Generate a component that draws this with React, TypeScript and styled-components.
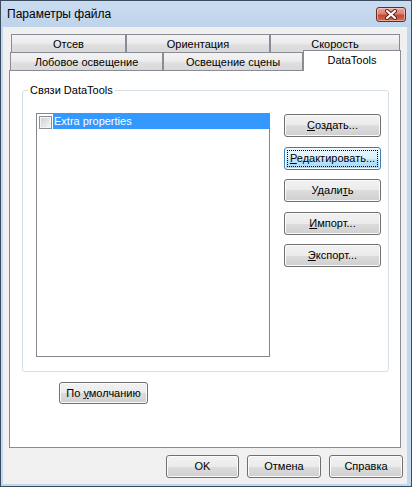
import React from "react";
import styled, { createGlobalStyle, css } from "styled-components";

const GlobalStyle = createGlobalStyle`
  html, body { margin: 0; padding: 0; background: #ffffff; }
  body { font-family: "Liberation Sans", Arial, sans-serif; font-size: 11px; color: #000; }
  * { box-sizing: border-box; }
`;

const Window = styled.div`
  width: 412px;
  height: 487px;
  border: 1px solid #3b4c60;
  background: #c3d8ee;
  display: flex;
  flex-direction: column;
`;

const TitleBar = styled.div`
  height: 26px;
  flex: none;
  display: flex;
  align-items: center;
  justify-content: space-between;
  padding: 0 5px 0 6px;
  background: linear-gradient(#cadcf0, #bed4ec);
  font-size: 12px;
  color: #000;
`;

const CloseButton = styled.div`
  width: 30px;
  height: 15px;
  border: 1px solid #6a2a22;
  border-radius: 3px;
  background: linear-gradient(#e9a99b 0%, #d8816f 45%, #c24a36 55%, #d06a52 100%);
  box-shadow: inset 0 0 0 1px rgba(255, 220, 210, 0.55);
  display: flex;
  align-items: center;
  justify-content: center;
`;

const Client = styled.div`
  flex: 1;
  margin: 0 4px 2px 2px;
  background: #f0f0f0;
  display: flex;
  flex-direction: column;
  padding: 7px 0 0 6px;
`;

const TabRow = styled.div<{ $indent: number }>`
  display: flex;
  align-items: flex-start;
  height: 18px;
  margin-left: ${(p) => p.$indent}px;
`;

const Tab = styled.div<{ $w: number; $selected?: boolean }>`
  width: ${(p) => p.$w}px;
  height: 19px;
  flex: none;
  border: 1px solid #898c95;
  border-bottom: none;
  display: flex;
  align-items: center;
  justify-content: center;
  padding-bottom: 1px;
  background: linear-gradient(#f3f3f3 0%, #ececec 45%, #dfdfdf 55%, #d8d8d8 100%);
  white-space: nowrap;
  ${(p) =>
    p.$selected &&
    css`
      height: 21px;
      margin-top: -2px;
      background: #ffffff;
      position: relative;
      z-index: 1;
      padding-bottom: 3px;
    `}
`;

const Panel = styled.div`
  width: 392px;
  height: 378px;
  flex: none;
  border: 1px solid #898c95;
  background: #ffffff;
  padding: 19px 0 0 12px;
  display: flex;
  flex-direction: column;
`;

const GroupBox = styled.div`
  position: relative;
  width: 367px;
  height: 282px;
  border: 1px solid #d5dfe5;
  border-radius: 3px;
  display: flex;
  align-items: flex-start;
  gap: 14px;
  padding: 22px 0 0 13px;
`;

const GroupCaption = styled.span`
  position: absolute;
  top: -8px;
  left: 5px;
  padding: 0 2px;
  background: #ffffff;
  line-height: 14px;
`;

const ListBox = styled.div`
  width: 234px;
  height: 244px;
  flex: none;
  border: 1px solid #828790;
  background: #ffffff;
`;

const ListItem = styled.div`
  height: 15px;
  display: flex;
  align-items: center;
`;

const CheckBox = styled.span`
  width: 13px;
  height: 13px;
  flex: none;
  margin: 1px 1px 0 2px;
  border: 1px solid #8e8f8f;
  background: linear-gradient(135deg, #cbcfd5, #f7f7f7);
  box-shadow: inset 0 0 0 1px #f4f4f4;
`;

const ItemLabel = styled.span`
  flex: 1;
  height: 15px;
  line-height: 14px;
  padding-left: 1px;
  background: #3399ff;
  color: #ffffff;
`;

const ButtonColumn = styled.div`
  display: flex;
  flex-direction: column;
  gap: 9.5px;
  margin-top: 1px;
`;

const Button = styled.div<{ $w: number; $h?: number; $focused?: boolean }>`
  position: relative;
  width: ${(p) => p.$w}px;
  height: ${(p) => p.$h ?? 23}px;
  flex: none;
  border: 1px solid #707070;
  border-radius: 3px;
  background: linear-gradient(#f2f2f2 0%, #ebebeb 50%, #dddddd 50%, #cfcfcf 100%);
  box-shadow: inset 0 0 0 1px #fbfbfb;
  display: flex;
  align-items: center;
  justify-content: center;
  white-space: nowrap;
  padding-bottom: 1px;
  u { text-decoration: underline; text-underline-offset: 1px; }
  ${(p) =>
    p.$focused &&
    css`
      border-color: #3c7fb1;
      background: linear-gradient(#eaf6fd 0%, #d9f0fc 50%, #bee6fd 50%, #a7d9f5 100%);
      box-shadow: inset 0 0 0 1px #f4fbff;
      &::after {
        content: "";
        position: absolute;
        inset: 2px;
        border: 1px dotted #000000;
      }
    `}
`;

const DefaultRow = styled.div`
  display: flex;
  margin-top: 10px;
  padding-left: 37px;
`;

const BottomRow = styled.div`
  display: flex;
  justify-content: flex-end;
  gap: 8px;
  margin-top: 7px;
  padding-right: 4px;
`;

export default function App() {
  return (
    <>
      <GlobalStyle />
      <Window>
        <TitleBar>
          <span>Параметры файла</span>
          <CloseButton>
            <svg width="14" height="11" viewBox="0 0 14 11">
              <path d="M3 2 L11 9 M11 2 L3 9" stroke="#5a1d15" strokeWidth="4" strokeLinecap="round" />
              <path d="M3 2 L11 9 M11 2 L3 9" stroke="#ffffff" strokeWidth="2.2" strokeLinecap="round" />
            </svg>
          </CloseButton>
        </TitleBar>
        <Client>
          <TabRow $indent={2}>
            <Tab $w={115}>Отсев</Tab>
            <Tab $w={144}>Ориентация</Tab>
            <Tab $w={130}>Скорость</Tab>
          </TabRow>
          <TabRow $indent={1}>
            <Tab $w={153}>Лобовое освещение</Tab>
            <Tab $w={140}>Освещение сцены</Tab>
            <Tab $w={98} $selected>
              DataTools
            </Tab>
          </TabRow>
          <Panel>
            <GroupBox>
              <GroupCaption>Связи DataTools</GroupCaption>
              <ListBox>
                <ListItem>
                  <CheckBox />
                  <ItemLabel>Extra properties</ItemLabel>
                </ListItem>
              </ListBox>
              <ButtonColumn>
                <Button $w={97}>
                  <span>
                    <u>С</u>оздать...
                  </span>
                </Button>
                <Button $w={97} $focused>
                  <span>
                    <u>Р</u>едактировать...
                  </span>
                </Button>
                <Button $w={97}>
                  <span>
                    Удали<u>т</u>ь
                  </span>
                </Button>
                <Button $w={97}>
                  <span>
                    <u>И</u>мпорт...
                  </span>
                </Button>
                <Button $w={97}>
                  <span>
                    <u>Э</u>кспорт...
                  </span>
                </Button>
              </ButtonColumn>
            </GroupBox>
            <DefaultRow>
              <Button $w={89} $h={22}>
                <span>
                  По <u>у</u>молчанию
                </span>
              </Button>
            </DefaultRow>
          </Panel>
          <BottomRow>
            <Button $w={73}>OK</Button>
            <Button $w={74}>Отмена</Button>
            <Button $w={74}>Справка</Button>
          </BottomRow>
        </Client>
      </Window>
    </>
  );
}
